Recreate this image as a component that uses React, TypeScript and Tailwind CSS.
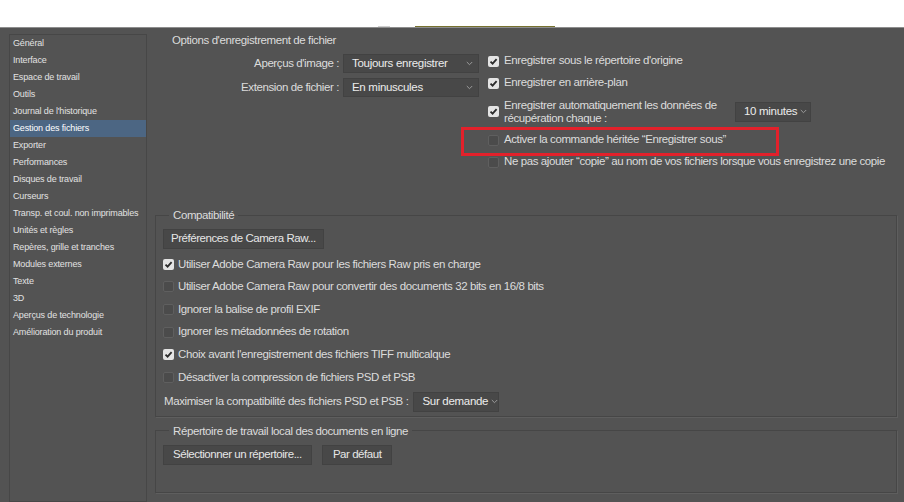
import React from 'react';

const sidebarItems = [
  'Général',
  'Interface',
  'Espace de travail',
  'Outils',
  "Journal de l'historique",
  'Gestion des fichiers',
  'Exporter',
  'Performances',
  'Disques de travail',
  'Curseurs',
  'Transp. et coul. non imprimables',
  'Unités et règles',
  'Repères, grille et tranches',
  'Modules externes',
  'Texte',
  '3D',
  'Aperçus de technologie',
  'Amélioration du produit',
];

const font = { fontFamily: '"Liberation Sans", Arial, sans-serif' };

function Check({ checked }: { checked?: boolean }) {
  if (checked) {
    return (
      <span className="flex h-[11px] w-[11px] shrink-0 items-center justify-center rounded-[2px] bg-[#e4e4e4]">
        <svg width="9" height="9" viewBox="0 0 9 9">
          <path d="M1.5 4.6 L3.6 6.7 L7.6 2.2" fill="none" stroke="#2b2b2b" strokeWidth="1.8" />
        </svg>
      </span>
    );
  }
  return <span className="h-[11px] w-[11px] shrink-0 rounded-[2px] border border-[#5f5f5f] bg-[#4b4b4b]" />;
}

function Chevron() {
  return (
    <svg width="7" height="5" viewBox="0 0 7 5" className="shrink-0">
      <path d="M0.8 1 L3.5 3.7 L6.2 1" fill="none" stroke="#9b9b9b" strokeWidth="1" />
    </svg>
  );
}

function Select({ value, className }: { value: string; className: string }) {
  return (
    <div
      className={`flex h-[19px] shrink-0 items-center justify-between gap-[3px] whitespace-nowrap border border-[#424242] bg-[#484848] pl-[8px] pr-[5px] text-[11.5px] tracking-[-0.3px] text-[#ececec] ${className}`}
    >
      <span>{value}</span>
      <Chevron />
    </div>
  );
}

function Button({ label, className = 'px-[7px]' }: { label: string; className?: string }) {
  return (
    <div
      className={`flex h-[20px] w-fit items-center whitespace-nowrap border border-[#424242] bg-[#484848] text-[11.5px] tracking-[-0.45px] text-[#e6e6e6] ${className}`}
    >
      {label}
    </div>
  );
}

function CheckRow({ checked, label }: { checked?: boolean; label: string }) {
  return (
    <div className="flex h-[22.6px] items-center gap-[4px] pl-[7px]">
      <Check checked={checked} />
      <span>{label}</span>
    </div>
  );
}

export default function App() {
  return (
    <div
      className="relative flex h-[502px] w-[904px] flex-col overflow-hidden bg-[#535353] text-[11.5px] tracking-[-0.4px] text-[#dcdcdc]"
      style={font}
    >
      {/* top strip */}
      <div className="relative h-[28px] shrink-0 border-b border-[#8d8d8d] bg-white">
        <div className="absolute bottom-0 left-[378px] h-[1px] w-[12px] bg-[#cfcfcf]" />
        <div className="absolute bottom-0 left-[415px] h-[1px] w-[140px] bg-[#77722f]" />
      </div>

      <div className="flex flex-1 pl-[9px]">
        {/* Sidebar */}
        <div className="mt-[6px] w-[138px] shrink-0 border border-[#474747] text-[9px] tracking-[-0.15px] text-[#e2e2e2]">
          {sidebarItems.map((item) => (
            <div
              key={item}
              className={`h-[17px] pl-[3px] leading-[17px] ${item === 'Gestion des fichiers' ? 'bg-[#4c6683] text-white' : ''}`}
            >
              {item}
            </div>
          ))}
        </div>

        {/* Main */}
        <div className="ml-[8px] flex w-[742px] flex-col">
          {/* File save options */}
          <div className="flex h-[180px]">
            <div className="w-[333px] pl-[17px] pt-[5px]">
              <div className="h-[14px] leading-[14px]">Options d'enregistrement de fichier</div>
              <div className="mt-[7px] flex flex-col gap-[5px] pr-[9px]">
                <div className="flex items-center justify-end gap-[4px]">
                  <span>Aperçus d'image :</span>
                  <Select value="Toujours enregistrer" className="w-[136px]" />
                </div>
                <div className="flex items-center justify-end gap-[4px]">
                  <span>Extension de fichier :</span>
                  <Select value="En minuscules" className="w-[136px]" />
                </div>
              </div>
            </div>

            <div className="flex flex-col pt-[22px]">
              <div className="flex h-[22px] items-center gap-[5px]">
                <Check checked />
                <span>Enregistrer sous le répertoire d'origine</span>
              </div>
              <div className="flex h-[22px] items-center gap-[5px]">
                <Check checked />
                <span>Enregistrer en arrière-plan</span>
              </div>
              <div className="flex h-[35px] items-center gap-[5px]">
                <Check checked />
                <span className="w-[226px] leading-[13px]">
                  Enregistrer automatiquement les données de
                  <br />
                  récupération chaque :
                </span>
                <Select value="10 minutes" className="h-[20px] w-[76px]" />
              </div>
              <div className="flex h-[22px] items-center gap-[5px]">
                <Check />
                <span>Activer la commande héritée “Enregistrer sous”</span>
              </div>
              <div className="flex h-[22px] items-center gap-[5px]">
                <Check />
                <span>Ne pas ajouter “copie” au nom de vos fichiers lorsque vous enregistrez une copie</span>
              </div>
            </div>
          </div>

          {/* Compatibility */}
          <fieldset className="border border-[#464646] pb-[4px] shadow-[1px_1px_0_#5e5e5e]">
            <legend className="ml-[13px] px-[4px] leading-[14px]">Compatibilité</legend>
            <div className="mt-[7px] pl-[7px]">
              <Button label="Préférences de Camera Raw..." />
            </div>
            <div className="mt-[4px] flex flex-col">
              <CheckRow checked label="Utiliser Adobe Camera Raw pour les fichiers Raw pris en charge" />
              <CheckRow label="Utiliser Adobe Camera Raw pour convertir des documents 32 bits en 16/8 bits" />
              <CheckRow label="Ignorer la balise de profil EXIF" />
              <CheckRow label="Ignorer les métadonnées de rotation" />
              <CheckRow checked label="Choix avant l'enregistrement des fichiers TIFF multicalque" />
              <CheckRow label="Désactiver la compression de fichiers PSD et PSB" />
            </div>
            <div className="mt-[3px] flex items-center gap-[5px] pl-[8px]">
              <span>Maximiser la compatibilité des fichiers PSD et PSB :</span>
              <Select value="Sur demande" className="h-[20px] w-[86px]" />
            </div>
          </fieldset>

          {/* Local working directory */}
          <fieldset className="mt-[7px] h-[69px] border border-[#464646] shadow-[1px_1px_0_#5e5e5e]">
            <legend className="ml-[13px] px-[4px] leading-[14px]">Répertoire de travail local des documents en ligne</legend>
            <div className="mt-[7px] flex gap-[10px] pl-[7px]">
              <Button label="Sélectionner un répertoire..." className="px-[9px]" />
              <Button label="Par défaut" className="px-[10px]" />
            </div>
          </fieldset>
        </div>
      </div>

      {/* annotation frame */}
      <div className="absolute left-[461px] top-[127px] h-[29px] w-[318px] border-[3px] border-[#e3212b]" />
    </div>
  );
}
